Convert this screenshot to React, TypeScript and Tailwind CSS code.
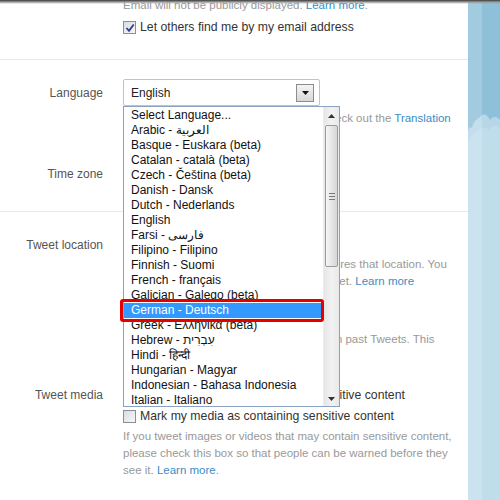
import React from "react";

const HELP = "text-[11.5px] leading-[17px] text-[#999] whitespace-nowrap";
const LINK = "text-[#3a8dc5]";

function CheckBox({ checked }: { checked?: boolean }) {
  return (
    <span className="relative inline-block w-[13px] h-[13px] shrink-0 border border-[#8f8f8f] bg-gradient-to-br from-[#d9dce3] to-[#f7f7f9]">
      {checked && (
        <svg className="absolute left-[1px] top-[1px]" width="10" height="10" viewBox="0 0 10 10">
          <path d="M1.5 5 L4 7.8 L8.7 1.5" fill="none" stroke="#2c3f8f" strokeWidth="1.8" />
        </svg>
      )}
    </span>
  );
}

function CheckRow({
  checked,
  text,
  hidden,
}: {
  checked?: boolean;
  text: React.ReactNode;
  hidden?: string;
}) {
  return (
    <div className="flex items-center h-[16px] text-[12.25px] text-[#333] whitespace-nowrap">
      <CheckBox checked={checked} />
      <span className="ml-[4px]">
        {hidden && <span className="invisible">{hidden}</span>}
        {text}
      </span>
    </div>
  );
}

function Row({
  label,
  children,
  className = "",
  center,
}: {
  label?: string;
  children: React.ReactNode;
  className?: string;
  center?: boolean;
}) {
  return (
    <div className={`flex ${center ? "items-center" : "items-start"} ${className}`}>
      <div className="w-[103px] shrink-0 text-right text-[12px] leading-[16px] text-[#555] whitespace-nowrap">
        {label}
      </div>
      <div className="ml-[20px] flex-1 min-w-0">{children}</div>
    </div>
  );
}

function SelectBox({ value }: { value?: string }) {
  return (
    <div className="w-[197px] h-[27px] border border-[#e5c07a] rounded-[2px] bg-white flex items-center justify-between pl-[7px] pr-[5px]">
      <span className="text-[12px] text-[#222]">{value}</span>
      <span className="w-[18px] h-[18px] border border-[#8c8c8c] bg-gradient-to-b from-[#f4f4f4] to-[#d8d8d8] flex items-center justify-center">
        <svg width="7" height="4" viewBox="0 0 7 4">
          <path d="M0 0 H7 L3.5 4 Z" fill="#111" />
        </svg>
      </span>
    </div>
  );
}

/* a help line whose left part lies under the open list */
function Partial({ hidden, children }: { hidden: string; children: React.ReactNode }) {
  return (
    <div className={HELP}>
      <span className="invisible">{hidden}</span>
      {children}
    </div>
  );
}

const languages = [
  "Select Language...",
  "Arabic - العربية",
  "Basque - Euskara (beta)",
  "Catalan - català (beta)",
  "Czech - Čeština (beta)",
  "Danish - Dansk",
  "Dutch - Nederlands",
  "English",
  "Farsi - فارسی",
  "Filipino - Filipino",
  "Finnish - Suomi",
  "French - français",
  "Galician - Galego (beta)",
  "German - Deutsch",
  "Greek - Ελληνικά (beta)",
  "Hebrew - עִבְרִית",
  "Hindi - हिन्दी",
  "Hungarian - Magyar",
  "Indonesian - Bahasa Indonesia",
  "Italian - Italiano",
];

function Dropdown() {
  return (
    <div className="absolute left-[123px] top-[106px] w-[217px] h-[301px] border border-[#8aa2c2] bg-white flex overflow-hidden">
      <div className="flex-1 pt-[1px]">
        {languages.map((l) => (
          <div
            key={l}
            className={`h-[15px] leading-[15px] pl-[7px] text-[12px] whitespace-nowrap ${
              l === "German - Deutsch" ? "bg-[#3399ff] text-white mr-[1px]" : "text-[#111]"
            }`}
          >
            {l}
          </div>
        ))}
      </div>
      <div className="relative w-[16px] h-full bg-gradient-to-r from-[#e6e6e6] via-[#f2f2f2] to-[#e9e9e9] border-l border-[#ececec]">
        <div className="h-[17px] flex items-center justify-center">
          <svg width="7" height="4" viewBox="0 0 7 4">
            <path d="M0 4 H7 L3.5 0 Z" fill="#333" />
          </svg>
        </div>
        <div className="mt-[1px] mx-[1px] h-[142px] rounded-[2px] border border-[#9c9c9c] bg-gradient-to-r from-[#f6f6f6] to-[#d6d6d6] flex flex-col items-center justify-center gap-[2px]">
          <span className="block w-[6px] h-px bg-[#777]" />
          <span className="block w-[6px] h-px bg-[#777]" />
          <span className="block w-[6px] h-px bg-[#777]" />
        </div>
        <div className="absolute bottom-0 left-0 w-full h-[15px] flex items-center justify-center">
          <svg width="7" height="4" viewBox="0 0 7 4">
            <path d="M0 0 H7 L3.5 4 Z" fill="#333" />
          </svg>
        </div>
      </div>
    </div>
  );
}

function SkyStrip() {
  return (
    <svg width="32" height="500" viewBox="0 0 32 500" className="block">
      <rect width="32" height="500" fill="#c0ddec" />
      <path
        d="M0 0 H32 V120 Q27 114 22 120 Q17 110 11 118 Q6 120 4 128 Q1 126 0 132 Z"
        fill="#8fc0da"
      />
      <path
        d="M0 132 Q1 126 4 128 Q6 120 11 118 Q17 110 22 120 Q27 114 32 120 V128 Q26 122 21 130 Q15 124 9 132 Q4 134 0 142 Z"
        fill="#b0d3e7"
        opacity="0.6"
      />
      <rect x="0" width="14" height="500" fill="#ffffff" opacity="0.18" />
    </svg>
  );
}

export default function App() {
  return (
    <div className="relative w-[500px] h-[500px] overflow-hidden bg-white font-['Liberation_Sans',Arial,sans-serif]">
      <div className="flex h-full">
        <main className="w-[468px] h-full overflow-hidden bg-white">
          <section className="h-[60px] border-b border-[#e8e8e8]">
            <Row>
              <div className={`${HELP} mt-[-3px]`}>
                Email will not be publicly displayed. <span className={LINK}>Learn more</span>.
              </div>
              <div className="mt-[5px]">
                <CheckRow checked text="Let others find me by my email address" />
              </div>
            </Row>
          </section>

          <section className="h-[152px] border-b border-[#e8e8e8] pt-[19px]">
            <Row label="Language" center>
              <SelectBox value="English" />
            </Row>
            <Row className="mt-[4px]">
              <Partial hidden="Interested in helping translate Twitter? Ch">
                eck out the <span className={LINK}>Translation</span>
              </Partial>
              <div className="h-[17px]" />
            </Row>
            <Row label="Time zone" center className="mt-[16px]">
              <SelectBox />
            </Row>
          </section>

          <section className="pt-[25px]">
            <Row label="Tweet location">
              <CheckRow text="" />
              <div className="mt-[3px]">
                <Partial hidden="When you tweet with a location, Twitter sto">
                  res that location. You
                </Partial>
                <Partial hidden="can switch location on/off before each Twe">
                  et. <span className={LINK}>Learn more</span>
                </Partial>
              </div>
              <div className="mt-[8px] h-[26px] w-[180px] border border-[#ccc] rounded-[4px] bg-[#f4f4f4]" />
              <div className="mt-[7px]">
                <Partial hidden="This will delete all location information fro">
                  m past Tweets. This
                </Partial>
                <div className="h-[17px]" />
              </div>
            </Row>
            <Row label="Tweet media" className="mt-[22px]">
              <CheckRow hidden="Display media that may contain sen" text="sitive content" />
              <div className="mt-[5px]">
                <CheckRow text="Mark my media as containing sensitive content" />
              </div>
              <div className="mt-[4px]">
                <div className={HELP}>
                  If you tweet images or videos that may contain sensitive content,
                </div>
                <div className={HELP}>
                  please check this box so that people can be warned before they
                </div>
                <div className={HELP}>
                  see it. <span className={LINK}>Learn more</span>.
                </div>
              </div>
            </Row>
          </section>
        </main>
        <aside className="flex-1 h-full">
          <SkyStrip />
        </aside>
      </div>

      <div className="absolute top-0 left-0 right-0 h-[4px] bg-gradient-to-b from-[#3c3c3c] via-[#9a9a9a] to-transparent" />

      <Dropdown />

      <div className="absolute left-[120px] top-[299px] w-[204px] h-[23px] border-[3px] border-[#e50000] rounded-[3px]" />
    </div>
  );
}
